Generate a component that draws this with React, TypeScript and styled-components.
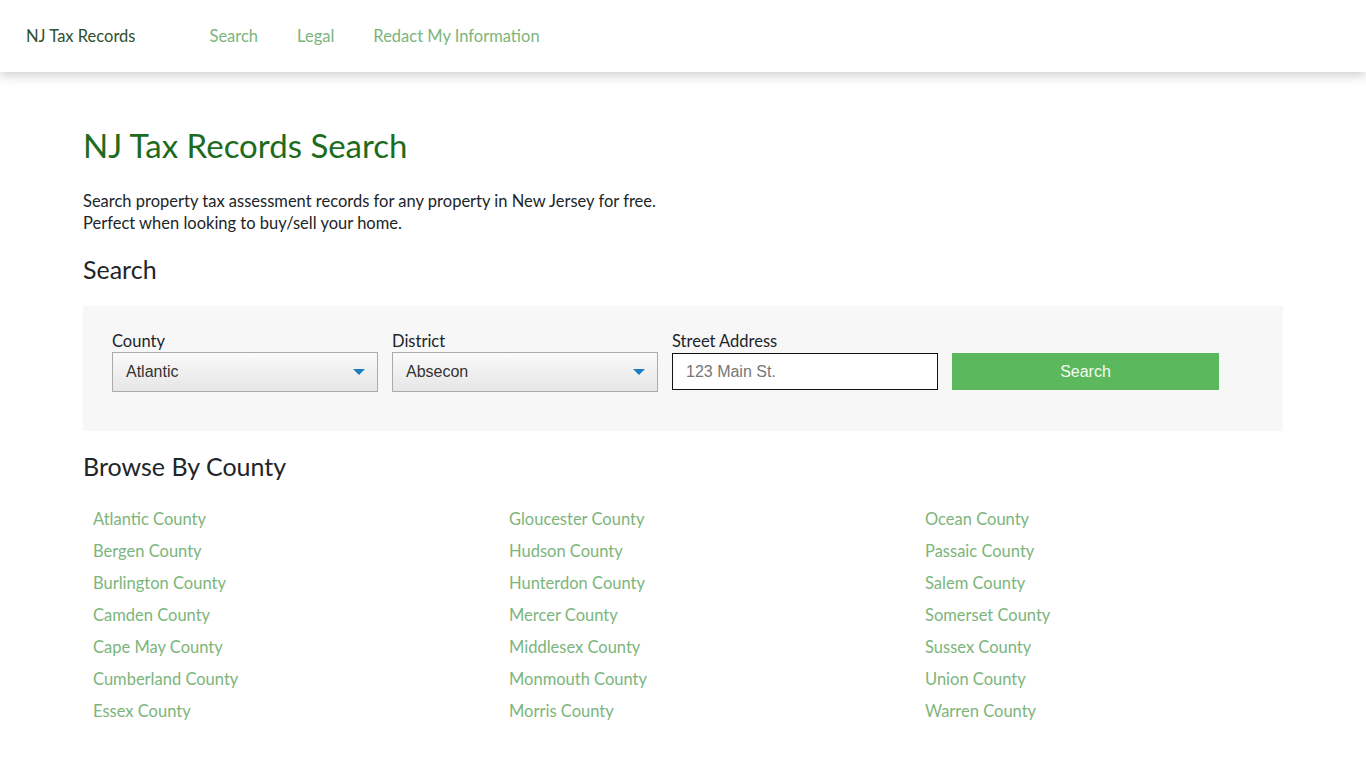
import styled, { createGlobalStyle } from 'styled-components';

const GlobalStyle = createGlobalStyle`
    body {
        margin: 0;
        background: #fff;
        font-family: "Lato", "Noto Sans", sans-serif;
        color: #212529;
    }
`

const NavBar = styled.nav`
    display: flex;
    align-items: center;
    height: 72px;
    padding: 0 26px;
    box-sizing: border-box;
    background: #fff;
    box-shadow: 0 4px 10px rgba(0, 0, 0, 0.18);
    position: relative;
    z-index: 2;
`
const Brand = styled.a`
    font-size: 16.5px;
    color: #2f4f2f;
    text-decoration: none;
    margin-right: 74px;
`
const NavLink = styled.a`
    font-size: 16.5px;
    color: #7cb57c;
    text-decoration: none;
    margin-right: 39px;
`

const Main = styled.main`
    width: 1200px;
    margin: 0 auto;
    padding-top: 53px;
`
const Title = styled.h1`
    margin: 0 0 25px;
    font-size: 33px;
    font-weight: 400;
    color: #1d6b1d;
    line-height: 40px;
`
const Intro = styled.p`
    margin: 0 0 20px;
    font-size: 16.5px;
    line-height: 22px;
`
const SectionTitle = styled.h2`
    margin: 0 0 22px;
    font-size: 25px;
    font-weight: 400;
    line-height: 30px;
`

const SearchPanel = styled.form`
    display: flex;
    align-items: flex-start;
    gap: 14px;
    background: #f7f7f7;
    padding: 24px 29px 39px;
    margin-bottom: 20px;
`
const Field = styled.label`
    display: flex;
    flex-direction: column;
    width: 266px;
    font-size: 16.5px;
    line-height: 22px;
`
const SelectBox = styled.div`
    display: flex;
    align-items: center;
    justify-content: space-between;
    height: 38px;
    padding: 0 12px 0 13px;
    border: 1px solid #aaa;
    background: linear-gradient(#fafafa, #e6e6e6);
    font-family: "Liberation Sans", Arial, sans-serif;
    font-size: 16px;
    color: #333;
`
const Arrow = styled.span`
    width: 0;
    height: 0;
    border-left: 6px solid transparent;
    border-right: 6px solid transparent;
    border-top: 6px solid #1a7dbf;
`
const TextInput = styled.input`
    box-sizing: border-box;
    height: 37px;
    margin-top: 1px;
    padding: 0 13px;
    border: 1px solid #111;
    background: #fff;
    font-family: "Liberation Sans", Arial, sans-serif;
    font-size: 16px;
    &::placeholder { color: #777; }
`
const SearchButton = styled.button`
    width: 267px;
    height: 37px;
    margin-top: 23px;
    border: none;
    background: #5cb85c;
    color: #f4fbf4;
    font-family: "Liberation Sans", Arial, sans-serif;
    font-size: 16px;
`

const CountyGrid = styled.ul`
    display: grid;
    grid-template-columns: repeat(3, 416px);
    grid-auto-flow: column;
    grid-template-rows: repeat(7, 32px);
    list-style: none;
    margin: 18px 0 0;
    padding: 0 0 0 10px;
`
const CountyLink = styled.a`
    font-size: 16.5px;
    line-height: 32px;
    color: #7cb57c;
    text-decoration: none;
`

const counties = [
    'Atlantic', 'Bergen', 'Burlington', 'Camden', 'Cape May', 'Cumberland', 'Essex',
    'Gloucester', 'Hudson', 'Hunterdon', 'Mercer', 'Middlesex', 'Monmouth', 'Morris',
    'Ocean', 'Passaic', 'Salem', 'Somerset', 'Sussex', 'Union', 'Warren',
];

export default function App() {
    return (
        <>
            <GlobalStyle />
            <NavBar>
                <Brand href="#">NJ Tax Records</Brand>
                <NavLink href="#">Search</NavLink>
                <NavLink href="#">Legal</NavLink>
                <NavLink href="#">Redact My Information</NavLink>
            </NavBar>
            <Main>
                <Title>NJ Tax Records Search</Title>
                <Intro>
                    Search property tax assessment records for any property in New Jersey for free.<br />
                    Perfect when looking to buy/sell your home.
                </Intro>
                <SectionTitle>Search</SectionTitle>
                <SearchPanel onSubmit={(e) => e.preventDefault()}>
                    <Field>
                        County
                        <SelectBox>Atlantic<Arrow /></SelectBox>
                    </Field>
                    <Field>
                        District
                        <SelectBox>Absecon<Arrow /></SelectBox>
                    </Field>
                    <Field>
                        Street Address
                        <TextInput placeholder="123 Main St." />
                    </Field>
                    <SearchButton type="submit">Search</SearchButton>
                </SearchPanel>
                <SectionTitle>Browse By County</SectionTitle>
                <CountyGrid>
                    {counties.map((c) => (
                        <li key={c}><CountyLink href="#">{c} County</CountyLink></li>
                    ))}
                </CountyGrid>
            </Main>
        </>
    );
}
